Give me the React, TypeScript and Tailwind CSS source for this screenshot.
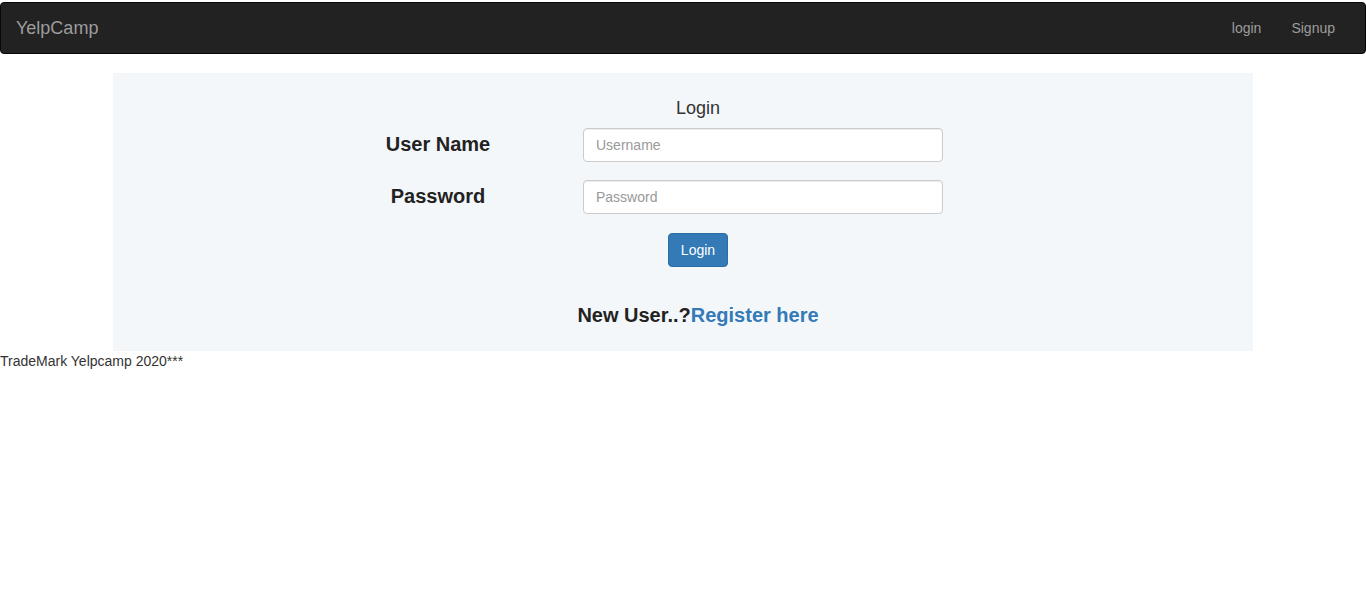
export default function App() {
  return (
    <div className="min-h-screen bg-white text-[14px] text-[#333] font-['Liberation_Sans',Arial,sans-serif]">
      {/* Navbar */}
      <nav className="mt-[2px] flex h-[52px] items-center justify-between rounded-[4px] border border-[#080808] bg-[#222]">
        <a className="px-[15px] text-[18px] leading-[20px] text-[#9d9d9d]">YelpCamp</a>
        <div className="mr-[15px] flex">
          <a className="px-[15px] leading-[20px] text-[#9d9d9d]">login</a>
          <a className="px-[15px] leading-[20px] text-[#9d9d9d]">Signup</a>
        </div>
      </nav>

      {/* Login panel */}
      <div className="mx-auto mt-[19px] w-[1140px] bg-[#f4f7fa] pt-[25px] pb-[25px]">
        <div className="ml-[240px] w-[690px]">
          <h3 className="text-center text-[18px] leading-[20px] text-[#333]">Login</h3>

          <div className="mt-[10px] flex items-center">
            <label className="mb-[2px] w-[170px] text-center text-[20px] font-bold text-[#222]">User Name</label>
            <input
              placeholder="Username"
              className="ml-[60px] h-[34px] w-[360px] rounded-[4px] border border-[#ccc] bg-white px-[12px] text-[14px] placeholder:text-[#999] shadow-[inset_0_1px_1px_rgba(0,0,0,0.075)]"
            />
          </div>

          <div className="mt-[18px] flex items-center">
            <label className="mb-[2px] w-[170px] text-center text-[20px] font-bold text-[#222]">Password</label>
            <input
              type="password"
              placeholder="Password"
              className="ml-[60px] h-[34px] w-[360px] rounded-[4px] border border-[#ccc] bg-white px-[12px] text-[14px] placeholder:text-[#999] shadow-[inset_0_1px_1px_rgba(0,0,0,0.075)]"
            />
          </div>

          <div className="mt-[19px] flex justify-center">
            <button className="h-[34px] w-[60px] rounded-[4px] border border-[#2e6da4] bg-[#337ab7] text-[14px] text-white">
              Login
            </button>
          </div>

          <p className="mt-[37px] text-center text-[20px] leading-[22px] font-bold text-[#222]">
            New User..?<a className="text-[#337ab7]">Register here</a>
          </p>
        </div>
      </div>

      <div className="leading-[20px]">TradeMark Yelpcamp 2020***</div>
    </div>
  )
}
